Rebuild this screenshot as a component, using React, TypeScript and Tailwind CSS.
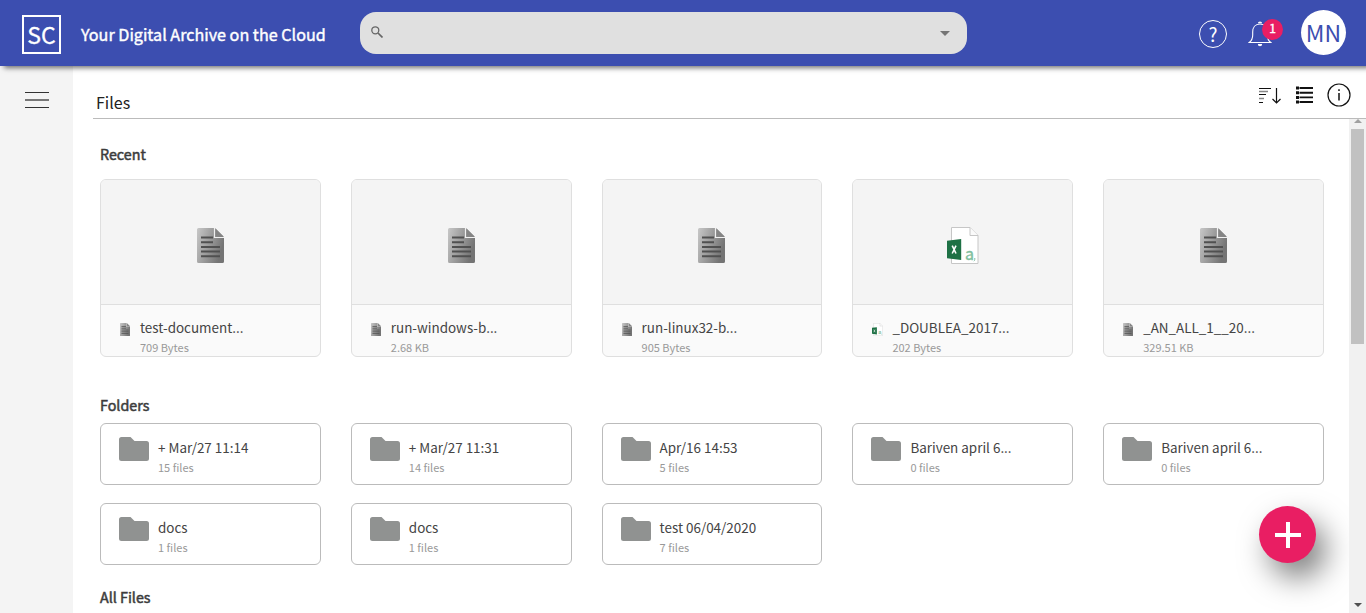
import React from "react";

type RecentFile = { name: string; size: string; kind: "text" | "csv" };
type Folder = { name: string; count: number };

const recent: RecentFile[] = [
  { name: "test-document...", size: "709 Bytes", kind: "text" },
  { name: "run-windows-b...", size: "2.68 KB", kind: "text" },
  { name: "run-linux32-b...", size: "905 Bytes", kind: "text" },
  { name: "_DOUBLEA_2017...", size: "202 Bytes", kind: "csv" },
  { name: "_AN_ALL_1__20...", size: "329.51 KB", kind: "text" },
];

const folders: Folder[] = [
  { name: "+ Mar/27 11:14", count: 15 },
  { name: "+ Mar/27 11:31", count: 14 },
  { name: "Apr/16 14:53", count: 5 },
  { name: "Bariven april 6...", count: 0 },
  { name: "Bariven april 6...", count: 0 },
  { name: "docs", count: 1 },
  { name: "docs", count: 1 },
  { name: "test 06/04/2020", count: 7 },
];

function TextFileIcon({ className }: { className: string }) {
  return (
    <svg viewBox="0 0 27 35" className={className}>
      <defs>
        <linearGradient id="sheet" x1="0" y1="0" x2="1" y2="0.4">
          <stop offset="0" stopColor="#c8c8c8" />
          <stop offset="1" stopColor="#747474" />
        </linearGradient>
      </defs>
      <path d="M1.5 0H18l9 9v24.5a1.5 1.5 0 0 1-1.5 1.5h-24A1.5 1.5 0 0 1 0 33.500V1.500A1.500 1.500 0 0 1 1.500 0Z" fill="url(#sheet)" />
      <path d="M17.500 0v9.500H27" fill="none" stroke="#f0f0f0" strokeWidth="1.200" />
      <path d="M18.500 0.500 26.500 8.500h-8Z" fill="#858585" />
      <path d="M4 9.500h12M4 14.200h12M4 19h19M4 23.600h19M4 28.300h19" stroke="#505050" strokeWidth="2" />
    </svg>
  );
}

function CsvFileIcon({ className }: { className: string }) {
  return (
    <svg viewBox="0 0 32 37" className={className}>
      <path d="M4.500 0.500H23l8 8v28H4.500Z" fill="#fff" stroke="#c6c6c6" />
      <path d="M23 0.500v8h8" fill="#fafafa" stroke="#c6c6c6" />
      <path d="M0 13.700 14.200 12v21L0 31.200Z" fill="#1e7145" />
      <path d="M5.200 18.700 9 26.500M9 18.700 5.200 26.500" stroke="#fff" strokeWidth="1.600" />
      <text x="18" y="33" fontSize="16" fill="#7fbf9f" stroke="#7fbf9f" strokeWidth="0.4" fontFamily="Noto Sans CJK SC, sans-serif">a</text>
      <path d="M27.800 31v1.300q0 1.200-1 1.900" stroke="#7fbf9f" fill="none" />
    </svg>
  );
}

function RecentCard({ file }: { file: RecentFile }) {
  const Icon = file.kind === "csv" ? CsvFileIcon : TextFileIcon;
  const big = file.kind === "csv" ? "h-[37px] w-8" : "h-[35px] w-[27px]";
  const small = file.kind === "csv" ? "h-[13px] w-[11px]" : "h-[13px] w-2.5";
  return (
    <div className="flex h-[178px] flex-col overflow-hidden rounded-md border border-[#dfdfdf] bg-[#fafafa]">
      <div className="flex h-[125px] shrink-0 items-center justify-center border-b border-[#dfdfdf] bg-[#f4f4f4] pt-[7px]">
        <Icon className={big} />
      </div>
      <div className="flex pl-[19px] pt-[11px]">
        <div className="flex w-5 shrink-0 pt-[7px]">
          <Icon className={small} />
        </div>
        <div>
          <div className="h-[22px] whitespace-nowrap text-[13.45px] leading-[22px] text-[#444]">{file.name}</div>
          <div className="whitespace-nowrap text-[11px] leading-[18px] text-[#999]">{file.size}</div>
        </div>
      </div>
    </div>
  );
}

function FolderCard({ folder }: { folder: Folder }) {
  return (
    <div className="flex h-[62px] rounded-md border border-[#bbb] bg-white pl-[18px] pt-3">
      <svg viewBox="0 0 30 24" className="mt-px h-6 w-[30px] shrink-0">
        <path d="M2.500 0H11.500L15.500 4H27.500A2.500 2.500 0 0 1 30 6.500V21.500A2.500 2.500 0 0 1 27.500 24H2.500A2.500 2.500 0 0 1 0 21.500V2.500A2.500 2.500 0 0 1 2.500 0Z" fill="#909291" />
      </svg>
      <div className="pl-[9px]">
        <div className="h-[22px] whitespace-nowrap text-[13.45px] leading-[22px] text-[#444]">{folder.name}</div>
        <div className="whitespace-nowrap text-[11px] leading-[18px] text-[#999]">{folder.count} files</div>
      </div>
    </div>
  );
}

function Header() {
  return (
    <header className="z-10 flex h-[66px] shrink-0 items-center bg-[#3c4eb0] text-white shadow-[4px_2px_5px_rgba(0,0,0,0.55)]">
      <div className="ml-[22px] mt-[3px] flex h-[39px] w-[39px] items-center justify-center border-2 border-white text-[23px] leading-none [-webkit-text-stroke:0.3px_white]">
        SC
      </div>
      <h1 className="ml-5 mt-px w-[279px] whitespace-nowrap text-[16.15px] leading-6 [-webkit-text-stroke:0.4px_white]">
        Your Digital Archive on the Cloud
      </h1>
      <div className="flex h-[42px] w-[607px] items-center justify-between rounded-[16px] bg-[#e0e0e0] pl-[11px] pr-[17px]">
        <svg viewBox="0 0 12 12" className="mb-0.5 h-3 w-3" fill="none" stroke="#666" strokeWidth="1.300">
          <circle cx="4.300" cy="4.300" r="3.500" />
          <path d="M7 7l4.500 4.500" strokeWidth="1.700" />
        </svg>
        <svg viewBox="0 0 10 5" className="h-[5px] w-2.5"><path d="M0 0h10L5 5Z" fill="#757575" /></svg>
      </div>
      <div className="ml-[232px] mt-[2px] flex h-7 w-7 items-center justify-center rounded-full border border-white pb-0.5 text-[19px] leading-none">
        ?
      </div>
      <div className="relative ml-[21px] mt-[2px] h-7 w-6">
        <svg viewBox="0 0 24 28" className="h-7 w-6" fill="none" stroke="#fff" strokeWidth="1.100">
          <path d="M1.200 22.500c2.800-2 3.500-4 3.500-7.500v-3c0-4.500 2.500-8 7.300-8s7.300 3.500 7.300 8v3c0 3.500 .7 5.500 3.500 7.500Z" />
          <path d="M10.500 3.200a1.500 1.200 0 0 1 3 0M10.500 24.500a1.500 1.200 0 0 0 3 0Z" fill="#fff" />
        </svg>
        <span className="absolute -top-px left-3.5 flex h-[21px] w-[21px] items-center justify-center rounded-full bg-[#e91e63] pb-[3px] text-[12px] leading-none [-webkit-text-stroke:0.4px_white]">
          1
        </span>
      </div>
      <div className="-mt-0.5 ml-[29px] flex h-[45px] w-[45px] items-center justify-center rounded-full bg-white text-[23px] leading-none text-[#3c4eb0]">
        MN
      </div>
    </header>
  );
}

function Toolbar() {
  return (
    <div className="ml-5 flex h-[53px] shrink-0 items-center border-b border-[#bbb]">
      <h2 className="ml-[3px] mt-[19px] flex-1 text-[16px] leading-6 text-[#222]">Files</h2>
      <svg viewBox="0 0 24 20" className="mt-1.5 h-5 w-6" fill="none">
        <path d="M1 3.500h12M1 9.500h7M1 17.500h4" stroke="#111" />
        <path d="M1 6.500h9M1 13.500h5" stroke="#888" strokeWidth="1.700" />
        <path d="M18.500 3v15M14.500 14l4 4 4-4" stroke="#111" strokeWidth="1.200" />
      </svg>
      <svg viewBox="0 0 17 18" className="ml-[14px] mt-1.5 h-[18px] w-[17px]" stroke="#111" strokeWidth="1.900">
        <path d="M3.500 2h13.500M3.500 6.700h13.500M3.500 11.400h13.500M3.500 16h13.500" />
        <path d="M0 2h3M0 6.700h3M0 11.400h3M0 16h3" strokeWidth="3" />
      </svg>
      <svg viewBox="0 0 24 24" className="ml-[14px] mr-[15px] mt-1.5 h-6 w-6" fill="none" stroke="#111">
        <circle cx="12" cy="12" r="11" strokeWidth="1.200" />
        <path d="M12 10v7.500M12 6.300v1.700" strokeWidth="1.500" />
      </svg>
    </div>
  );
}

function Scrollbar() {
  return (
    <div className="flex w-[17px] shrink-0 flex-col items-center bg-[#f1f1f1]">
      <svg viewBox="0 0 8 4" className="h-1 w-2"><path d="M0 4h8L4 0Z" fill="#a0a0a0" /></svg>
      <div className="mt-[6px] h-[215px] w-[13px] bg-[#c1c1c1]" />
      <svg viewBox="0 0 8 4" className="mb-1.5 mt-auto h-1 w-2"><path d="M0 0h8L4 4Z" fill="#505050" /></svg>
    </div>
  );
}

function SectionTitle({ children }: { children: React.ReactNode }) {
  return <h3 className="text-[14.3px] leading-6 text-[#3c3c3c] [-webkit-text-stroke:0.5px_#3c3c3c]">{children}</h3>;
}

export default function App() {
  return (
    <div className="flex h-[613px] w-[1366px] flex-col overflow-hidden bg-white [font-family:'Noto_Sans_CJK_SC',sans-serif]">
      <Header />
      <div className="flex min-h-0 flex-1">
        <aside className="w-[73px] shrink-0 bg-[#f4f4f4] pl-[25px] pt-[26px]">
          <svg viewBox="0 0 24 16" className="h-4 w-6">
            <path d="M0 .5h24M0 15.500h24" stroke="#333" />
            <path d="M0 8h24" stroke="#777" strokeWidth="2" />
          </svg>
        </aside>
        <div className="flex min-w-0 flex-1 flex-col">
          <Toolbar />
          <div className="flex min-h-0 flex-1">
            <main className="relative min-w-0 flex-1 overflow-hidden pl-[27px] pr-[25px] pt-[23px]">
              <SectionTitle>Recent</SectionTitle>
              <div className="mt-[13px] grid grid-cols-5 gap-x-[30px]">
                {recent.map((f) => <RecentCard key={f.name} file={f} />)}
              </div>
              <div className="pt-9">
                <SectionTitle>Folders</SectionTitle>
              </div>
              <div className="mt-[6px] grid grid-cols-5 gap-x-[30px] gap-y-[18px]">
                {folders.map((f, i) => <FolderCard key={i} folder={f} />)}
              </div>
              <div className="pt-5">
                <SectionTitle>All Files</SectionTitle>
              </div>
              <button aria-label="Add" className="absolute left-[1186px] top-[387px] flex h-[57px] w-[57px] items-center justify-center rounded-full bg-[#e91e63] shadow-[10px_15px_30px_rgba(0,0,0,0.5)]">
                <svg viewBox="0 0 26 26" className="h-[26px] w-[26px]"><path d="M0 13h26M13 0v26" stroke="#fff" strokeWidth="4" /></svg>
              </button>
            </main>
            <Scrollbar />
          </div>
        </div>
      </div>
    </div>
  );
}
